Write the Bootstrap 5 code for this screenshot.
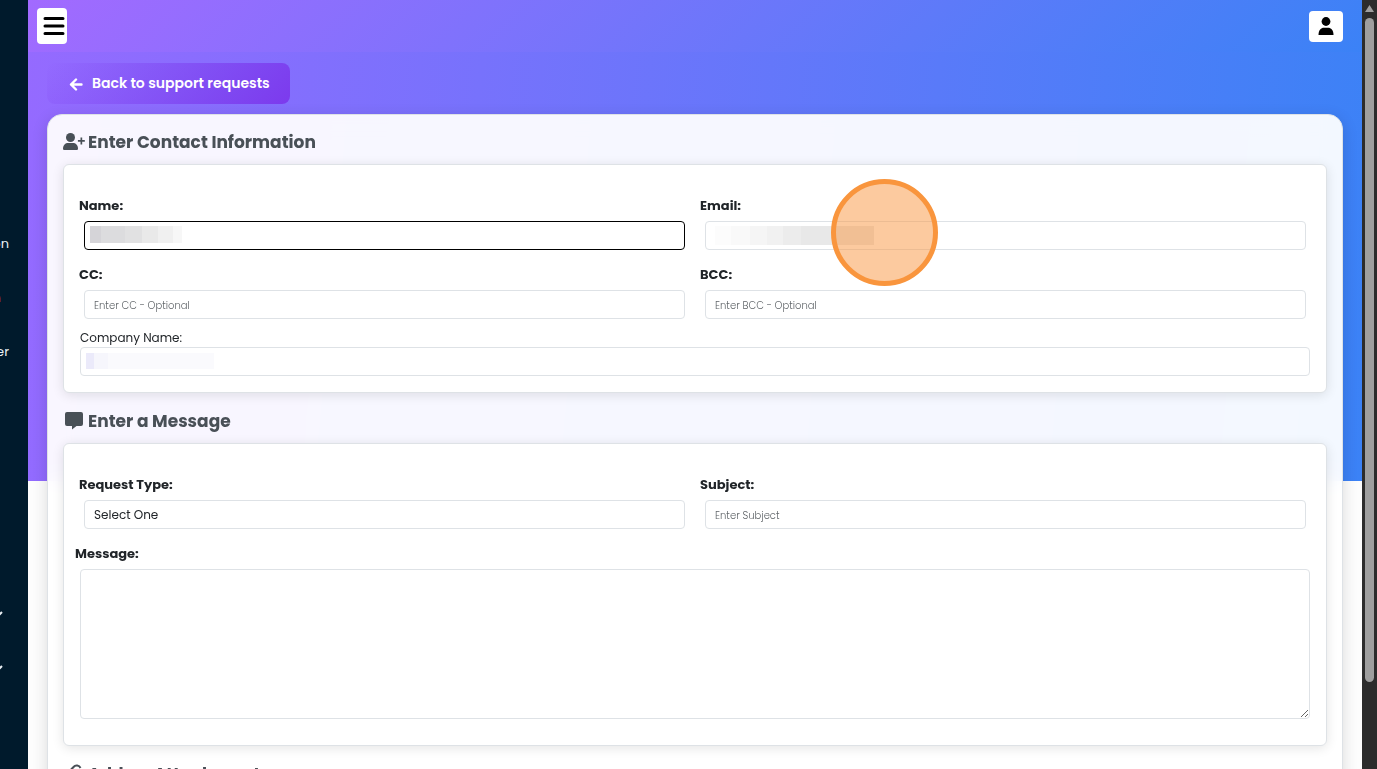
<!DOCTYPE html>
<html lang="en">
<head>
<meta charset="utf-8">
<meta name="viewport" content="width=device-width, initial-scale=1">
<title>Support request</title>
<link href="https://cdn.jsdelivr.net/npm/bootstrap@5.3.0/dist/css/bootstrap.min.css" rel="stylesheet">
<style>
  body { font-family: Poppins, Inter, "Open Sans", sans-serif; font-size: 13px; color: #212529; background: #fdfdfd; }
  .side-rail { width: 28px; background: #001a2c; color: #e8eef3; }
  .side-rail ul { padding-top: 217px; padding-right: 19px; }
  .side-rail li { height: 54px; display: flex; justify-content: flex-end; align-items: center; }
  .side-rail a { color: inherit; text-decoration: none; line-height: 20px; }
  .side-rail .side-alert { color: #a8323a; margin-right: 8px; }
  .side-rail .side-gap { height: 208px; }
  .side-rail svg { flex-shrink: 0; margin-right: 4px; }
  .page-area { background: linear-gradient(95deg, #956aff 0%, #3b82f6 100%) top / 100% 481px no-repeat #fdfdfd; }
  .top-strip { height: 52px; padding: 0 19px 0 9px; background: linear-gradient(135deg, #a26aff 0%, #3b82f6 100%); }
  .menu-btn { width: 30px; height: 36px; padding: 0 0 0 4px; background: #fff; border-radius: 4px; }
  .user-btn { width: 34px; height: 31px; padding: 0; background: #fff; border-radius: 4px; }
  .back-btn { height: 41px; margin: 11px 0 10px; padding: 0 20px 0 22px; gap: 9px; border-radius: 8px; color: #fff; font-size: 14px; font-weight: 600; background: linear-gradient(135deg, #8b5cf600 0%, #7c3aed 100%); }
  .page-body { padding: 0 19px; }
  .form-shell { min-height: 900px; padding: 15px; border: 1px solid #dee2e6; border-radius: 15px; box-shadow: 0 4px 16px #00000024; background: #fffffff0; backdrop-filter: blur(10px); }
  .section-title { height: 24px; margin: 0 0 10px; gap: 3px; font-size: 17px; line-height: 24px; font-weight: 700; color: #495057; }
  .section-title svg { width: 22px; height: 20px; fill: #495057; }
  .panel { margin-bottom: 16px; border: 1px solid #dee2e6; border-radius: 6px; background: #fff; box-shadow: 0 2px 12px #0000001c; }
  .panel-pad { padding: 31px 11px 16px; }
  .panel-pad.is-tall { padding-bottom: 26px; }
  .two-up { --bs-gutter-x: 10px; margin-left: -1px; margin-right: -1px; }
  .field-label { font-weight: 700; line-height: 20px; margin-bottom: 5px; display: block; }
  .company-label { display: block; margin-top: 10px; font-size: 12px; line-height: 18px; }
  .inset-box { padding: 0 5px; }
  .field { height: 29px; min-height: 29px; padding: 0 9px; border: 1px solid #dee2e6; border-radius: 4px; font-size: 12px; color: #212529; background: #fff; box-shadow: none; }
  .field::placeholder { font-size: 10px; font-weight: 300; color: #5f6468; }
  .field.is-current { border-color: #000; }
  .field-row { margin-bottom: 15px; }
  .masked { position: relative; }
  .mask { position: absolute; pointer-events: none; top: 5px; left: 6px; }
  .mask-name { width: 92px; height: 17px; background: linear-gradient(90deg, #d5d4d8 0 12%, #dcdcde 12% 38%, #e1e1e2 38% 56%, #e9e9e9 56% 74%, #f0f0f0 74% 90%, #f7f7f7 90%); }
  .mask-mail { left: 10px; width: 159px; height: 19px; background: linear-gradient(90deg, #fcfcfc 0 10%, #f9f9f9 10% 22%, #f5f5f5 22% 33%, #f1f1f1 33% 43%, #ececec 43% 54%, #e8e8e8 54%); }
  .mask-firm { width: 128px; height: 16px; top: 6px; background: linear-gradient(90deg, #ebeafa 0 6%, #f6f6fc 6% 17%, #fafafd 17%); }
  .click-ring { position: absolute; left: 126px; top: -42px; width: 107px; height: 107px; border: 5px solid #f9953d; border-radius: 50%; background: #f9954080; pointer-events: none; z-index: 2; }
  .message-box { height: 150px; min-height: 150px; resize: vertical; }
  .scroll-rail { width: 15px; padding: 4px 3px 0 3px; background: #2c2c2c; }
  .scroll-thumb { width: 9px; height: 664px; margin-top: 5px; border-radius: 5px; background: #9f9f9f; }
</style>
</head>
<body>
<div class="d-flex vh-100 overflow-hidden">
  <nav class="side-rail flex-shrink-0 overflow-hidden" aria-label="Sidebar">
    <ul class="list-unstyled mb-0">
      <li><a href="#">on</a></li>
      <li><a href="#" class="side-alert">n</a></li>
      <li><a href="#">er</a></li>
      <li class="side-gap"></li>
      <li><svg width="16" height="8" viewBox="0 0 16 8" fill="none" stroke="#e8eef3" stroke-width="2"><path d="M5 2l4 4 4-4"/></svg></li>
      <li><svg width="16" height="8" viewBox="0 0 16 8" fill="none" stroke="#e8eef3" stroke-width="2"><path d="M5 2l4 4 4-4"/></svg></li>
    </ul>
  </nav>

  <div class="page-area flex-grow-1 overflow-hidden">
    <header class="top-strip d-flex align-items-center justify-content-between">
      <button type="button" class="menu-btn btn d-flex align-items-center justify-content-center" aria-label="Menu">
        <svg width="22" height="20" viewBox="0 0 22 20" stroke="#000" stroke-width="3" stroke-linecap="round"><path d="M2 2.500h18M2 10h18M2 17.500h18"/></svg>
      </button>
      <button type="button" class="user-btn btn d-flex align-items-center justify-content-center" aria-label="Account">
        <svg width="16" height="18" viewBox="0 0 16 18"><circle cx="8" cy="4.500" r="4.400"/><path d="M.5 18C.5 13 3 10.700 6 10.700h4c3 0 5.500 2.300 5.500 7.300z"/></svg>
      </button>
    </header>

    <main class="page-body">
      <button type="button" class="back-btn btn border-0 d-flex align-items-center">
        <svg width="14" height="14" viewBox="0 0 14 14" fill="none" stroke="#fff" stroke-width="2.400" stroke-linecap="round" stroke-linejoin="round"><path d="M12.500 7.500H2M7 2.500l-5 5 5 5"/></svg>
        Back to support requests
      </button>

      <form class="form-shell">
        <h2 class="section-title d-flex align-items-center">
          <svg viewBox="0 0 22 20" aria-hidden="true"><circle cx="7.500" cy="5.500" r="4.500"/><path d="M0 16.500c0-3.500 2.500-5.500 5-5.500h5c2.500 0 5 2 5 5.500 0 1-.6 1.500-1.500 1.500h-12C.6 18 0 17.500 0 16.500z"/><path d="M17.500 5.500h1.700v2.600h2.600v1.700h-2.600v2.600h-1.700V9.800h-2.600V8.100h2.600z"/></svg>
          Enter Contact Information
        </h2>
        <section class="panel">
          <div class="panel-pad">
            <div class="row two-up field-row">
              <div class="col-6">
                <label class="field-label" for="name">Name:</label>
                <div class="inset-box"><div class="masked">
                  <input id="name" type="text" class="form-control field is-current"><span class="mask mask-name"></span>
                </div></div>
              </div>
              <div class="col-6">
                <label class="field-label" for="email">Email:</label>
                <div class="inset-box"><div class="masked">
                  <input id="email" type="email" class="form-control field"><span class="mask mask-mail"></span><span class="click-ring"></span>
                </div></div>
              </div>
            </div>
            <div class="row two-up">
              <div class="col-6">
                <label class="field-label" for="cc">CC:</label>
                <div class="inset-box"><input id="cc" type="text" class="form-control field" placeholder="Enter CC - Optional"></div>
              </div>
              <div class="col-6">
                <label class="field-label" for="bcc">BCC:</label>
                <div class="inset-box"><input id="bcc" type="text" class="form-control field" placeholder="Enter BCC - Optional"></div>
              </div>
            </div>
            <div class="inset-box">
              <label class="company-label" for="company">Company Name:</label>
              <div class="masked"><input id="company" type="text" class="form-control field"><span class="mask mask-firm"></span></div>
            </div>
          </div>
        </section>

        <h2 class="section-title d-flex align-items-center">
          <svg viewBox="0 0 22 20" aria-hidden="true"><path d="M4 1h14a2 2 0 0 1 2 2v10a2 2 0 0 1-2 2h-4.500L9 18.500V15H4a2 2 0 0 1-2-2V3a2 2 0 0 1 2-2z"/></svg>
          Enter a Message
        </h2>
        <section class="panel">
          <div class="panel-pad is-tall">
            <div class="row two-up field-row">
              <div class="col-6">
                <label class="field-label" for="type">Request Type:</label>
                <div class="inset-box"><select id="type" class="form-control field"><option>Select One</option></select></div>
              </div>
              <div class="col-6">
                <label class="field-label" for="subject">Subject:</label>
                <div class="inset-box"><input id="subject" type="text" class="form-control field" placeholder="Enter Subject"></div>
              </div>
            </div>
            <label class="field-label" for="message">Message:</label>
            <div class="inset-box"><textarea id="message" class="form-control field message-box"></textarea></div>
          </div>
        </section>

        <h2 class="section-title d-flex align-items-center">
          <svg viewBox="0 0 22 20" aria-hidden="true"><path d="M9 11l4-4a2 2 0 0 1 3 3l-6 6a4 4 0 0 1-6-6l6.500-7a4.200 4.200 0 0 1 7 1" fill="none" stroke="#495057" stroke-width="2"/></svg>
          Add an Attachment
        </h2>
      </form>
    </main>
  </div>

  <div class="scroll-rail flex-shrink-0" aria-hidden="true">
    <svg class="d-block" width="9" height="9" viewBox="0 0 9 9"><path d="M4.500 1L9 8H0z" fill="#9f9f9f"/></svg>
    <div class="scroll-thumb"></div>
  </div>
</div>
<script src="https://cdn.jsdelivr.net/npm/bootstrap@5.3.0/dist/js/bootstrap.bundle.min.js"></script>
</body>
</html>
